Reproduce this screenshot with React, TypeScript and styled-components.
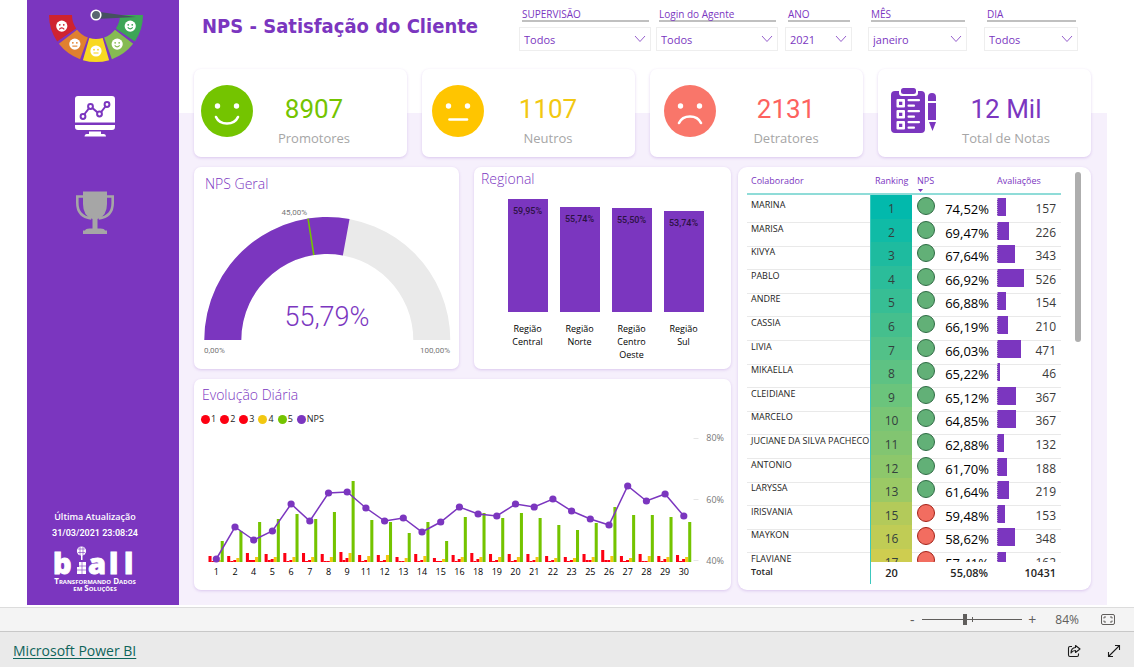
import React from "react";
import styled, { createGlobalStyle } from "styled-components";

const purple = "#7b36bf";
const sans = `"Open Sans", "Noto Sans", sans-serif`;
const din = `Roboto, "Open Sans", sans-serif`;

const GlobalStyle = createGlobalStyle`
  *, *::before, *::after { box-sizing: border-box; }
  body { margin: 0; background: #fff; font-family: ${sans}; color: #252423; }
  button, select, input { font: inherit; color: inherit; margin: 0; }
  h1, h2, p { margin: 0; }
`;

const Page = styled.div`
  display: flex;
  flex-direction: column;
  min-height: 100vh;
`;

const Report = styled.div`
  display: flex;
  flex: 1;
  margin: 0 27px;
  padding-bottom: 2px;
`;

/* ---------- sidebar ---------- */

const Sidebar = styled.nav`
  display: flex;
  flex-direction: column;
  align-items: center;
  width: 152px;
  flex: none;
  padding: 8px 16px 14px 0;
  background: ${purple};
  color: #fff;
`;

const NavButton = styled.button<{ $top: number }>`
  display: block;
  margin-top: ${(p) => p.$top}px;
  padding: 0;
  border: 0;
  background: none;
  cursor: pointer;
  svg { display: block; }
`;

const Updated = styled.div`
  margin-top: auto;
  text-align: center;
  font-size: 9px;
  line-height: 17px;
  font-weight: 600;
`;

const Timestamp = styled.p`
  font-family: ${din};
`;

const Brand = styled.div`
  margin-top: 4px;
  text-align: center;
  white-space: nowrap;
  svg { display: block; margin: 0 auto; }
`;

const Slogan = styled.p`
  font-size: 8px;
  line-height: 7px;
  font-weight: 700;
  font-variant: small-caps;
`;

/* ---------- main area ---------- */

const Main = styled.main`
  flex: 1;
  min-width: 0;
  padding: 0 16px 15px 15px;
  background: linear-gradient(#fff, #fff) 0 0 / 100% 113px no-repeat, #f6f0fc;
`;

const Header = styled.header`
  display: flex;
  justify-content: space-between;
  height: 69px;
  padding: 0 14px 0 8px;
`;

const Title = styled.h1`
  padding-top: 12px;
  font: 700 20px/28px "DejaVu Sans Condensed", "DejaVu Sans", sans-serif;
  color: ${purple};
  white-space: nowrap;
`;

const Filters = styled.div`
  display: grid;
  grid-template-columns: 137px 129px 83px 116px 93px;
`;

const Filter = styled.div<{ $width: number }>`
  width: ${(p) => p.$width}px;
  padding-top: 8px;
  color: ${purple};
`;

const FilterLabel = styled.label`
  display: block;
  margin: 0 2px 5px 3px;
  border-bottom: 2px solid #c0c0c0;
  font-size: 10px;
  line-height: 12px;
  white-space: nowrap;
`;

const SelectBox = styled.div`
  display: grid;
  align-items: center;
  height: 24px;
  border: 1px solid #eee;
  background: #fff;
  > * { grid-area: 1 / 1; }
  svg { justify-self: end; margin-right: 4px; pointer-events: none; }
`;

const Select = styled.select`
  width: 100%;
  height: 22px;
  padding: 0 20px 0 4px;
  border: 0;
  background: none;
  appearance: none;
  font-size: 11px;
`;

const card = `
  background: #fff;
  border-radius: 7px;
  box-shadow: 0 1px 3px rgba(123, 54, 191, 0.22);
`;

const Kpis = styled.section`
  display: grid;
  grid-template-columns: repeat(4, 1fr);
  gap: 15px;
`;

const Kpi = styled.article<{ $left: number; $right: number }>`
  ${card}
  display: grid;
  grid-template-columns: 52px 1fr;
  align-items: center;
  height: 88px;
  padding: 0 ${(p) => p.$right}px 4px ${(p) => p.$left}px;
  svg { display: block; }
`;

const KpiText = styled.div`
  padding-top: 22px;
  text-align: center;
  white-space: nowrap;
`;

const KpiValue = styled.p<{ $color: string }>`
  font-family: ${din};
  font-size: 26px;
  line-height: 32px;
  color: ${(p) => p.$color};
`;

const KpiLabel = styled.p`
  font-size: 13px;
  line-height: 26px;
  color: #a6a6a6;
`;

const Panels = styled.div`
  display: grid;
  grid-template-columns: 537fr 353fr;
  gap: 7px;
  margin-top: 10px;
`;

const Left = styled.div`
  display: grid;
  grid-template-columns: 265fr 257fr;
  grid-template-rows: 202px 211px;
  gap: 10px 15px;
`;

const Panel = styled.section<{ $wide?: boolean }>`
  ${card}
  grid-column: ${(p) => (p.$wide ? "1 / -1" : "auto")};
  min-width: 0;
  overflow: hidden;
`;

const PanelTitle = styled.h2<{ $pad: string }>`
  padding: ${(p) => p.$pad};
  font-size: 14px;
  line-height: 20px;
  font-weight: 300;
  color: ${purple};
`;

const Chart = styled.svg`
  display: block;
  width: 100%;
  font-family: ${sans};
`;

const Bars = styled.div`
  display: flex;
  justify-content: center;
  gap: 12px;
  padding: 10px 0 0 6px;
`;

const BarItem = styled.div`
  display: flex;
  flex-direction: column;
  align-items: center;
  width: 40px;
  text-align: center;
  font-size: 9px;
  line-height: 13px;
  color: #000;
`;

const BarTrack = styled.div`
  display: flex;
  align-items: flex-end;
  width: 40px;
  height: 113px;
  margin-bottom: 10px;
`;

const Bar = styled.div`
  width: 100%;
  padding-top: 5px;
  background: ${purple};
  font: 500 9px/14px ${din};
  color: #2c1244;
`;

const Legend = styled.ul`
  display: flex;
  gap: 4px;
  margin: 0;
  padding: 7px 0 0 7px;
  list-style: none;
  font-size: 9px;
  line-height: 14px;
`;

const LegendItem = styled.li<{ $color: string }>`
  display: flex;
  align-items: center;
  gap: 1px;
  &::before {
    content: "";
    width: 9px;
    height: 9px;
    border-radius: 50%;
    background: ${(p) => p.$color};
  }
`;

/* ---------- ranking table ---------- */

const TablePanel = styled(Panel)`
  display: flex;
  justify-content: space-between;
  align-items: flex-start;
  padding: 0 10px 0 9px;
  border-radius: 9px;
`;

const Table = styled.table`
  display: block;
  flex: 1;
  margin-right: 14px;
`;

const Row = styled.tr`
  display: grid;
  grid-template-columns: 1fr 42px 83px 66px;
`;

const Head = styled.thead`
  display: block;
  border-bottom: 2px solid #8fdcd8;
  ${Row} { height: 26px; }
`;

const HeadCell = styled.th<{ $pad: number }>`
  padding: 5px 0 0 ${(p) => p.$pad}px;
  text-align: left;
  font-size: 9px;
  line-height: 17px;
  font-weight: 400;
  color: ${purple};
  white-space: nowrap;
  svg { display: block; margin-left: 1px; }
`;

const Body = styled.tbody`
  display: block;
  height: 367px;
  overflow: hidden;
  ${Row} { height: 24px; }
  ${Row}:nth-child(5n + 2), ${Row}:nth-child(5n + 4) { height: 23px; }
`;

const Cell = styled.td`
  padding: 0;
  border-bottom: 1px solid #e9e9e9;
  white-space: nowrap;
`;

const NameCell = styled(Cell)`
  padding-left: 4px;
  font-size: 9px;
  line-height: 19px;
`;

const RankCell = styled(Cell)`
  border-left: 1px solid #3cc8be;
  border-bottom-color: rgba(255, 255, 255, 0.4);
  text-align: center;
  font-size: 12px;
  line-height: 27px;
  color: #33403d;
`;

const NpsCell = styled(Cell)`
  display: flex;
  align-items: flex-start;
  justify-content: space-between;
  padding: 2px 6px 0 5px;
  font-size: 13px;
  line-height: 24px;
  color: #000;
`;

const Dot = styled.span<{ $ok: boolean }>`
  width: 18px;
  height: 18px;
  border-radius: 50%;
  border: 1px solid ${(p) => (p.$ok ? "#2f6b44" : "#a32218")};
  background: ${(p) => (p.$ok ? "#62b077" : "#f26d60")};
`;

const CountCell = styled(Cell)`
  display: flex;
  justify-content: space-between;
  align-items: flex-start;
  padding: 2px 5px 0 2px;
  font-size: 12px;
  line-height: 24px;
  color: #3a3a3a;
`;

const CountBar = styled.span`
  height: 18px;
  margin-top: 1px;
  background: ${purple};
  border-left: 1px dotted #b9a5cc;
`;

const Foot = styled.tfoot`
  display: block;
  font-weight: 600;
  ${Row} { height: 20px; }
`;

const TotalLabel = styled.th`
  padding: 0 0 0 4px;
  text-align: left;
  font-size: 9px;
  line-height: 19px;
  font-weight: 600;
`;

const TotalCell = styled.td<{ $align: string; $right: number }>`
  padding: 0 ${(p) => p.$right}px 0 0;
  text-align: ${(p) => p.$align};
  font-size: 11px;
  line-height: 22px;
  &:nth-child(2) { border-left: 1px solid #3cc8be; }
`;

const Scrollbar = styled.div`
  width: 6px;
  height: 170px;
  margin-top: 5px;
  border-radius: 3px;
  background: #aeaeae;
`;

/* ---------- bottom bars ---------- */

const ZoomBar = styled.div`
  display: flex;
  align-items: center;
  justify-content: flex-end;
  height: 24px;
  padding-right: 19px;
  border-top: 1px solid #dcdcdc;
  background: #f4f4f4;
  color: #605e5c;
  font-size: 12px;
`;

const IconButton = styled.button`
  display: flex;
  align-items: center;
  justify-content: center;
  height: 20px;
  min-width: 14px;
  padding: 0;
  border: 0;
  background: none;
  cursor: pointer;
  font-size: 14px;
  line-height: 20px;
`;

const Zoom = styled.input`
  width: 100px;
  height: 12px;
  margin: 0 3px;
  appearance: none;
  background:
    linear-gradient(#605e5c, #605e5c) 50% 50% / 1px 5px no-repeat,
    linear-gradient(#605e5c, #605e5c) 0 50% / 100% 1px no-repeat;
  &::-webkit-slider-thumb {
    appearance: none;
    width: 4px;
    height: 11px;
    background: #605e5c;
  }
`;

const ZoomValue = styled.output`
  margin: 0 22px 0 16px;
`;

const Footer = styled.footer`
  display: flex;
  align-items: center;
  height: 37px;
  padding: 2px 13px 0 13px;
  border-top: 1px solid #c8c8c8;
  background: #eaeaea;
  color: #1b1b1b;
`;

const PowerLink = styled.a`
  margin-right: auto;
  font-size: 14px;
  line-height: 20px;
  color: #0e645a;
  text-underline-offset: 2px;
`;

const FooterIcons = styled.div`
  display: flex;
  gap: 26px;
`;

/* ---------- data ---------- */

const filters = [
  { id: "sup", label: "SUPERVISÃO", value: "Todos", width: 132 },
  { id: "login", label: "Login do Agente", value: "Todos", width: 122 },
  { id: "ano", label: "ANO", value: "2021", width: 67 },
  { id: "mes", label: "MÊS", value: "janeiro", width: 99 },
  { id: "dia", label: "DIA", value: "Todos", width: 94 },
];

const regions = [
  { name: "Região Central", value: "59,95%", height: 113 },
  { name: "Região Norte", value: "55,74%", height: 105 },
  { name: "Região Centro Oeste", value: "55,50%", height: 104 },
  { name: "Região Sul", value: "53,74%", height: 101 },
];

const people: [string, number, string, number, string][] = [
  ["MARINA", 1, "74,52%", 157, "#02b9ac"],
  ["MARISA", 2, "69,47%", 226, "#10bba6"],
  ["KIVYA", 3, "67,64%", 343, "#1ebb9f"],
  ["PABLO", 4, "66,92%", 526, "#2bbd9a"],
  ["ANDRE", 5, "66,88%", 154, "#37be94"],
  ["CASSIA", 6, "66,19%", 210, "#45bf8d"],
  ["LIVIA", 7, "66,03%", 471, "#52c188"],
  ["MIKAELLA", 8, "65,22%", 46, "#5ec283"],
  ["CLEIDIANE", 9, "65,12%", 367, "#6bc47c"],
  ["MARCELO", 10, "64,85%", 367, "#79c575"],
  ["JUCIANE DA SILVA PACHECO", 11, "62,88%", 132, "#82c571"],
  ["ANTONIO", 12, "61,70%", 188, "#8dc76b"],
  ["LARYSSA", 13, "61,64%", 219, "#9bc965"],
  ["IRISVANIA", 15, "59,48%", 153, "#b3ca5a"],
  ["MAYKON", 16, "58,62%", 348, "#c0cc55"],
  ["FLAVIANE", 17, "57,41%", 162, "#cecd50"],
];

/* day, NPS point height above the axis, then the bar heights of grades 1 to 5 */
const days: number[][] = [
  [1, 3, 6, 1, 2, 2, 21], [2, 35, 6, 1, 2, 4, 31], [4, 22, 9, 2, 2, 5, 40],
  [5, 31, 8, 2, 3, 5, 43], [6, 58, 9, 1, 2, 5, 48], [7, 41, 9, 1, 2, 5, 43],
  [8, 69, 8, 1, 1, 5, 50], [9, 70, 10, 2, 4, 9, 81], [11, 54, 7, 1, 2, 6, 42],
  [12, 41, 7, 1, 2, 7, 40], [13, 44, 5, 1, 1, 4, 29], [14, 30, 8, 1, 2, 6, 40],
  [15, 40, 4, 1, 1, 3, 21], [16, 55, 7, 1, 3, 5, 45], [18, 48, 9, 1, 3, 5, 49],
  [19, 46, 8, 1, 2, 5, 44], [20, 58, 8, 1, 2, 5, 49], [21, 55, 8, 1, 2, 5, 44],
  [22, 63, 6, 1, 2, 4, 37], [23, 51, 5, 1, 2, 4, 32], [25, 43, 8, 2, 2, 5, 39],
  [26, 37, 12, 2, 2, 6, 55], [27, 76, 6, 1, 2, 4, 47], [28, 61, 8, 1, 1, 6, 47],
  [29, 68, 6, 1, 3, 5, 45], [30, 46, 7, 1, 3, 5, 40],
];
const grades = ["#fd0012", "#fd0012", "#fd0012", "#f2c811", "#74c400"];

/* ---------- drawings ---------- */

const polar = (cx: number, cy: number, r: number, share: number) => {
  const a = Math.PI * (1 - share);
  return `${(cx + r * Math.cos(a)).toFixed(2)} ${(cy - r * Math.sin(a)).toFixed(2)}`;
};
const band = (cx: number, cy: number, R: number, r: number, a: number, b: number) =>
  `M${polar(cx, cy, R, a)}A${R} ${R} 0 0 1 ${polar(cx, cy, R, b)}L${polar(cx, cy, r, b)}A${r} ${r} 0 0 0 ${polar(cx, cy, r, a)}Z`;

const Face = ({ color, mood }: { color: string; mood: string }) => (
  <svg width="52" height="52" viewBox="0 0 52 52" aria-hidden="true">
    <circle cx="26" cy="26" r="26" fill={color} />
    <circle cx="16.5" cy="21" r="2.7" fill="#fff" />
    <circle cx="35.5" cy="21" r="2.7" fill="#fff" />
    <path d={mood} fill="none" stroke="#fff" strokeWidth="2.6" strokeLinecap="round" />
  </svg>
);

const Checklist = () => (
  <svg width="46" height="46" viewBox="0 0 46 46" aria-hidden="true">
    <path fill={purple} d="M4 3h4v2q0 3 3 3h13q3 0 3-3V3h3q4 0 4 4v34q0 4-4 4H4q-4 0-4-4V7q0-4 4-4z" />
    <rect x="10" y="0" width="15" height="6" rx="2.5" fill={purple} />
    <g fill="#fff">
      {[11, 22, 33].map((y) => (
        <g key={y}>
          <rect x="5.500" y={y} width="8.500" height="8.500" rx="1" />
          <rect x="8" y={y + 2.7} width="3.300" height="3.300" fill={purple} />
          <rect x="16.500" y={y} width="12.500" height="2.200" rx="1" />
          <rect x="16.500" y={y + 5.5} width="7.500" height="2.200" rx="1" />
        </g>
      ))}
    </g>
    <path fill={purple} d="M37 13V9q0-4 4-4t4 4v4zM37 15h8v17h-8zM38 34h7l-3.500 9z" />
  </svg>
);

const wedges: [string, string][] = [
  ["#3da557", "smile"], ["#86bb52", "smile"], ["#f8d820", "flat"], ["#e0802f", "flat"], ["#cf2330", "sad"],
];
const mouths: Record<string, string> = {
  smile: "M-2.500 1.300Q0 4.200 2.500 1.300",
  flat: "M-2.500 2H2.500",
  sad: "M-2.500 3.200Q0 .3 2.500 3.200",
};

const Meter = () => (
  <svg width="96" height="56" viewBox="0 0 96 56" aria-hidden="true">
    {wedges.map(([fill, mood], i) => {
      const mid = (Math.PI * (i + 0.5)) / 5;
      const edge = (r: number, k: number) => {
        const a = (Math.PI * k) / 5;
        return `${(49 + r * Math.cos(a)).toFixed(2)} ${(7 + r * Math.sin(a)).toFixed(2)}`;
      };
      const a = i === 0 ? 0 : i + 0.05;
      const b = i === 4 ? 5 : i + 0.95;
      return (
        <g key={i}>
          <path
            fill={fill}
            d={`M${edge(47, a)}A47 47 0 0 1 ${edge(47, b)}L${edge(24, b)}A24 24 0 0 0 ${edge(24, a)}Z`}
          />
          <g transform={`translate(${49 + 36 * Math.cos(mid)} ${7 + 36 * Math.sin(mid)})`}>
            <circle r="5.600" fill="#fff" />
            <circle cx="-2" cy="-1.300" r=".9" fill={fill} />
            <circle cx="2" cy="-1.300" r=".9" fill={fill} />
            <path d={mouths[mood]} fill="none" stroke={fill} strokeWidth="1.100" />
          </g>
        </g>
      );
    })}
    <path d="M49 3.500L89 9L49 11z" fill="#45525f" />
    <circle cx="49" cy="7" r="4.800" fill="#5a6670" stroke="#fff" strokeWidth="1.600" />
  </svg>
);

const Monitor = () => (
  <svg width="42" height="42" viewBox="0 0 42 42" aria-hidden="true">
    <path fill="#fff" d="M4 0h34q3 0 3 3v23.500H1V3q0-3 3-3zM1 29h40v2q0 3-3 3H4q-3 0-3-3zM15 35.500h12v2.500h3q2 0 2 2.500H10.500q0-2.500 2-2.500H15z" />
    <g fill="none" stroke={purple}>
      <path strokeWidth="2" d="M9 20L16.500 10.500L25.500 18L33 8.500" />
      <g fill="#fff" strokeWidth="2">
        <circle cx="9" cy="20.500" r="2.400" />
        <circle cx="16.500" cy="10.500" r="2.400" />
        <circle cx="25.500" cy="18" r="2.400" />
        <circle cx="33" cy="8.500" r="2.400" />
      </g>
    </g>
  </svg>
);

const Trophy = () => (
  <svg width="40" height="44" viewBox="0 0 40 44" aria-hidden="true">
    <path fill="#a6a6a6" d="M8 .5h24V13q0 12-9.500 15v9.500h3q4 0 4.500 2h2V43H8v-3.500h2q.5-2 4.500-2h3V28Q8 25 8 13z" />
    <path fill="none" stroke="#a6a6a6" strokeWidth="2.600" d="M9 5.500H2.300V12q0 13.500 14 15.500M31 5.500h6.700V12q0 13.500-14 15.500" />
  </svg>
);

const Logo = () => (
  <svg width="82" height="31" viewBox="0 0 82 31" aria-hidden="true">
    <g fill="#fff" stroke="#fff" strokeWidth=".8" fontFamily='"Open Sans", sans-serif' fontSize="29" fontWeight="800">
      <text x="-1" y="28">b</text>
      <text x="34 55 70" y="28">all</text>
    </g>
    <g fill="#fff">
      <circle cx="27.500" cy="5" r="4.600" />
      <rect x="27" y="9" width="1.500" height="5" />
      <path d="M25 16h7v12h-9v-7h2z" />
    </g>
    <path stroke={purple} strokeWidth=".6" fill="none" d="M22 20h10M22 24h10M28 16v12M24 3h7M24 6.500h7M26 1v8M29 1v8" />
  </svg>
);

const DailyChart = () => {
  const x = (i: number) => 22.3 + i * 18.7;
  const base = 131;
  return (
    <Chart viewBox="0 -5 537 155" role="img" aria-label="Evolução Diária">
      {days.map((d, i) => (
        <g key={d[0]}>
          {grades.map((c, g) => (
            <rect key={g} x={x(i) - 7.8 + g * 3.05} y={base - d[g + 2]} width="3.050" height={d[g + 2]} fill={c} />
          ))}
          <text x={x(i)} y={base + 13} textAnchor="middle" fontSize="9" fill="#000">
            {d[0]}
          </text>
        </g>
      ))}
      <polyline
        fill="none"
        stroke={purple}
        strokeWidth="1.500"
        points={days.map((d, i) => `${x(i)},${base - d[1]}`).join(" ")}
      />
      {days.map((d, i) => (
        <circle key={i} cx={x(i)} cy={base - d[1]} r="3.600" fill={purple} />
      ))}
      {["80%", "60%", "40%"].map((t, i) => (
        <g key={t}>
          <path d={`M499.500 ${7.5 + i * 61}h5`} stroke="#e6e6e6" />
          <text x="530" y={10 + i * 61.5} textAnchor="end" fontSize="9" fill="#777">
            {t}
          </text>
        </g>
      ))}
    </Chart>
  );
};

const Gauge = () => (
  <Chart viewBox="0 0 265 170" role="img" aria-label="NPS Geral 55,79%">
    <path fill="#eaeaea" d={band(133.3, 146, 123, 86, 0, 1)} />
    <path fill={purple} d={band(133.3, 146, 123, 86, 0, 0.5579)} />
    <path stroke="#74c400" strokeWidth="1.600" d={`M${polar(133.3, 146, 123, 0.45)}L${polar(133.3, 146, 86, 0.45)}`} />
    <g fontFamily="Roboto, sans-serif" fontSize="8" fill="#777">
      <text x="113" y="21" textAnchor="end">45,00%</text>
      <text x="10" y="159">0,00%</text>
      <text x="256" y="159" textAnchor="end">100,00%</text>
    </g>
    <text x="133" y="132" textAnchor="middle" fontFamily="Roboto, sans-serif" fontWeight="300" fontSize="27" fill={purple}>
      55,79%
    </text>
  </Chart>
);

export default function App() {
  return (
    <Page>
      <GlobalStyle />
      <Report>
        <Sidebar aria-label="Páginas">
          <Meter />
          <NavButton $top={32} aria-label="Painel"><Monitor /></NavButton>
          <NavButton $top={53} aria-label="Ranking"><Trophy /></NavButton>
          <Updated>
            <p>Última Atualização</p>
            <Timestamp>31/03/2021 23:08:24</Timestamp>
          </Updated>
          <Brand>
            <Logo />
            <Slogan>
              Transformando Dados
              <br />
              em Soluções
            </Slogan>
          </Brand>
        </Sidebar>
        <Main>
          <Header>
            <Title>NPS - Satisfação do Cliente</Title>
            <Filters>
              {filters.map((f) => (
                <Filter key={f.id} $width={f.width}>
                  <FilterLabel htmlFor={f.id}>{f.label}</FilterLabel>
                  <SelectBox>
                    <Select id={f.id}>
                      <option>{f.value}</option>
                    </Select>
                    <svg width="12" height="8" viewBox="0 0 12 8" aria-hidden="true">
                      <path d="M1 1l5 5.500L11 1" fill="none" stroke={purple} strokeWidth=".8" />
                    </svg>
                  </SelectBox>
                </Filter>
              ))}
            </Filters>
          </Header>

          <Kpis>
            <Kpi $left={7} $right={32}>
              <Face color="#74c400" mood="M15 32Q18 38.500 26 38.500T37 32" />
              <KpiText>
                <KpiValue $color="#74c400">8907</KpiValue>
                <KpiLabel>Promotores</KpiLabel>
              </KpiText>
            </Kpi>
            <Kpi $left={10} $right={23}>
              <Face color="#ffc500" mood="M17.500 34.500H35" />
              <KpiText>
                <KpiValue $color="#f2c811">1107</KpiValue>
                <KpiLabel>Neutros</KpiLabel>
              </KpiText>
            </Kpi>
            <Kpi $left={14} $right={7}>
              <Face color="#f9766a" mood="M15 38Q18 31.500 26 31.500T37 38" />
              <KpiText>
                <KpiValue $color="#fd625e">2131</KpiValue>
                <KpiLabel>Detratores</KpiLabel>
              </KpiText>
            </Kpi>
            <Kpi $left={13} $right={22}>
              <Checklist />
              <KpiText>
                <KpiValue $color={purple}>12 Mil</KpiValue>
                <KpiLabel>Total de Notas</KpiLabel>
              </KpiText>
            </Kpi>
          </Kpis>

          <Panels>
            <Left>
              <Panel>
                <PanelTitle $pad="7px 0 0 11px">NPS Geral</PanelTitle>
                <Gauge />
              </Panel>
              <Panel>
                <PanelTitle $pad="2px 0 0 7px">Regional</PanelTitle>
                <Bars>
                  {regions.map((r) => (
                    <BarItem key={r.name}>
                      <BarTrack>
                        <Bar style={{ height: r.height }}>{r.value}</Bar>
                      </BarTrack>
                      {r.name}
                    </BarItem>
                  ))}
                </Bars>
              </Panel>
              <Panel $wide>
                <PanelTitle $pad="6px 0 0 8px">Evolução Diária</PanelTitle>
                <Legend>
                  {grades.map((c, i) => (
                    <LegendItem key={i} $color={c}>{i + 1}</LegendItem>
                  ))}
                  <LegendItem $color={purple}>NPS</LegendItem>
                </Legend>
                <DailyChart />
              </Panel>
            </Left>

            <TablePanel>
              <Table>
                <Head>
                  <Row>
                    <HeadCell $pad={4}>Colaborador</HeadCell>
                    <HeadCell $pad={5}>Ranking</HeadCell>
                    <HeadCell $pad={5}>
                      NPS
                      <svg width="5" height="3" viewBox="0 0 5 3" aria-hidden="true">
                        <path d="M0 0h5L2.500 3z" fill={purple} />
                      </svg>
                    </HeadCell>
                    <HeadCell $pad={2}>Avaliações</HeadCell>
                  </Row>
                </Head>
                <Body>
                  {people.map(([name, rank, nps, count, color]) => (
                    <Row key={name}>
                      <NameCell>{name}</NameCell>
                      <RankCell style={{ backgroundColor: color }}>{rank}</RankCell>
                      <NpsCell>
                        <Dot $ok={rank < 14} />
                        {nps}
                      </NpsCell>
                      <CountCell>
                        <CountBar style={{ width: Math.round(count / 20.5) + 1 }} />
                        {count}
                      </CountCell>
                    </Row>
                  ))}
                </Body>
                <Foot>
                  <Row>
                    <TotalLabel scope="row">Total</TotalLabel>
                    <TotalCell $align="center" $right={0}>20</TotalCell>
                    <TotalCell $align="right" $right={7}>55,08%</TotalCell>
                    <TotalCell $align="right" $right={5}>10431</TotalCell>
                  </Row>
                </Foot>
              </Table>
              <Scrollbar />
            </TablePanel>
          </Panels>
        </Main>
      </Report>

      <ZoomBar>
        <IconButton aria-label="Diminuir zoom">-</IconButton>
        <Zoom type="range" min={0} max={100} defaultValue={42} aria-label="Zoom" />
        <IconButton aria-label="Aumentar zoom">+</IconButton>
        <ZoomValue>84%</ZoomValue>
        <IconButton aria-label="Ajustar à página">
          <svg width="14" height="11" viewBox="0 0 14 11" fill="none" stroke="#605e5c">
            <rect x=".5" y=".5" width="13" height="10" rx="1.500" />
            <path d="M5 3H3v1.500M3 6.500V8h2M9 3h2v1.500M11 6.500V8H9" />
          </svg>
        </IconButton>
      </ZoomBar>
      <Footer>
        <PowerLink href="#powerbi">Microsoft Power BI</PowerLink>
        <FooterIcons>
          <IconButton aria-label="Compartilhar">
            <svg width="14" height="14" viewBox="0 0 14 14" fill="none" stroke="currentColor" strokeWidth="1.100">
              <path d="M5 2.500H3Q1.500 2.500 1.500 4v7q0 1.500 1.500 1.500h7q1.500 0 1.500-1.500V9.500" />
              <path d="M8.500 1.500L13 5L8.500 8.500V6.500Q5.500 6.500 4 9Q4 4 8.500 3.500z" strokeLinejoin="round" />
            </svg>
          </IconButton>
          <IconButton aria-label="Tela cheia">
            <svg width="14" height="14" viewBox="0 0 14 14" fill="none" stroke="currentColor" strokeWidth="1.100">
              <path d="M1.500 12.500l11-11M8 1.500h4.500V6M1.500 8v4.500H6" />
            </svg>
          </IconButton>
        </FooterIcons>
      </Footer>
    </Page>
  );
}
